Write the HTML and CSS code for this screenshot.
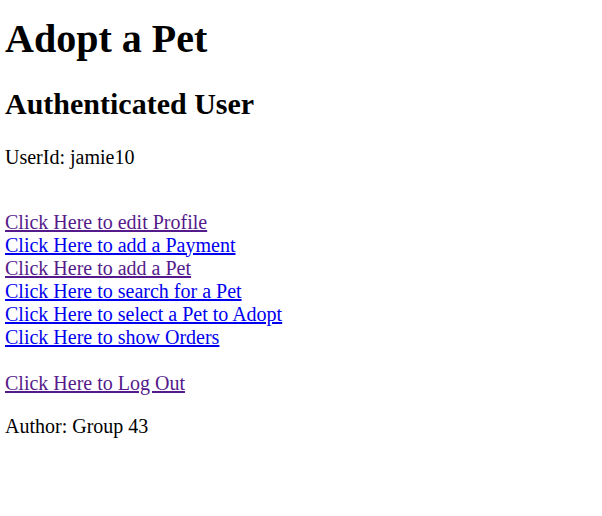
FILE: index.html
```html
<!DOCTYPE html>
<html>
<head>
<meta charset="utf-8">
<title>Adopt a Pet</title>
<link rel="stylesheet" href="styles.css">
</head>
<body class="page">
<h1 class="title">Adopt a Pet</h1>
<h2 class="subtitle">Authenticated User</h2>
<p class="text user">UserId: jamie10</p>
<div class="links">
<br>
<a class="link visited" href="#">Click Here to edit Profile</a><br>
<a class="link" href="#">Click Here to add a Payment</a><br>
<a class="link visited" href="#">Click Here to add a Pet</a><br>
<a class="link" href="#">Click Here to search for a Pet</a><br>
<a class="link" href="#">Click Here to select a Pet to Adopt</a><br>
<a class="link" href="#">Click Here to show Orders</a><br>
<br>
<a class="link visited" href="#">Click Here to Log Out</a>
</div>
<p class="text">Author: Group 43</p>
</body>
</html>
```

FILE: styles.css
```css
html, body {
  background: #ffffff;
}
.page {
  margin: 0;
  padding: 1px 5px 0;
  font-family: "Liberation Serif", "Times New Roman", serif;
  font-size: 20px;
  color: #000000;
}
.title {
  font-size: 40px;
  font-weight: bold;
  margin: 14px 0 24.8px;
}
.subtitle {
  font-size: 30px;
  font-weight: bold;
  margin: 24.8px 0;
}
.text {
  margin: 20px 0;
}
.text.user {
  margin-bottom: 19px;
}
.links {
  margin: 0;
}
.link {
  color: #0000ee;
  text-decoration: underline;
}
.link.visited {
  color: #551a8b;
}
```
